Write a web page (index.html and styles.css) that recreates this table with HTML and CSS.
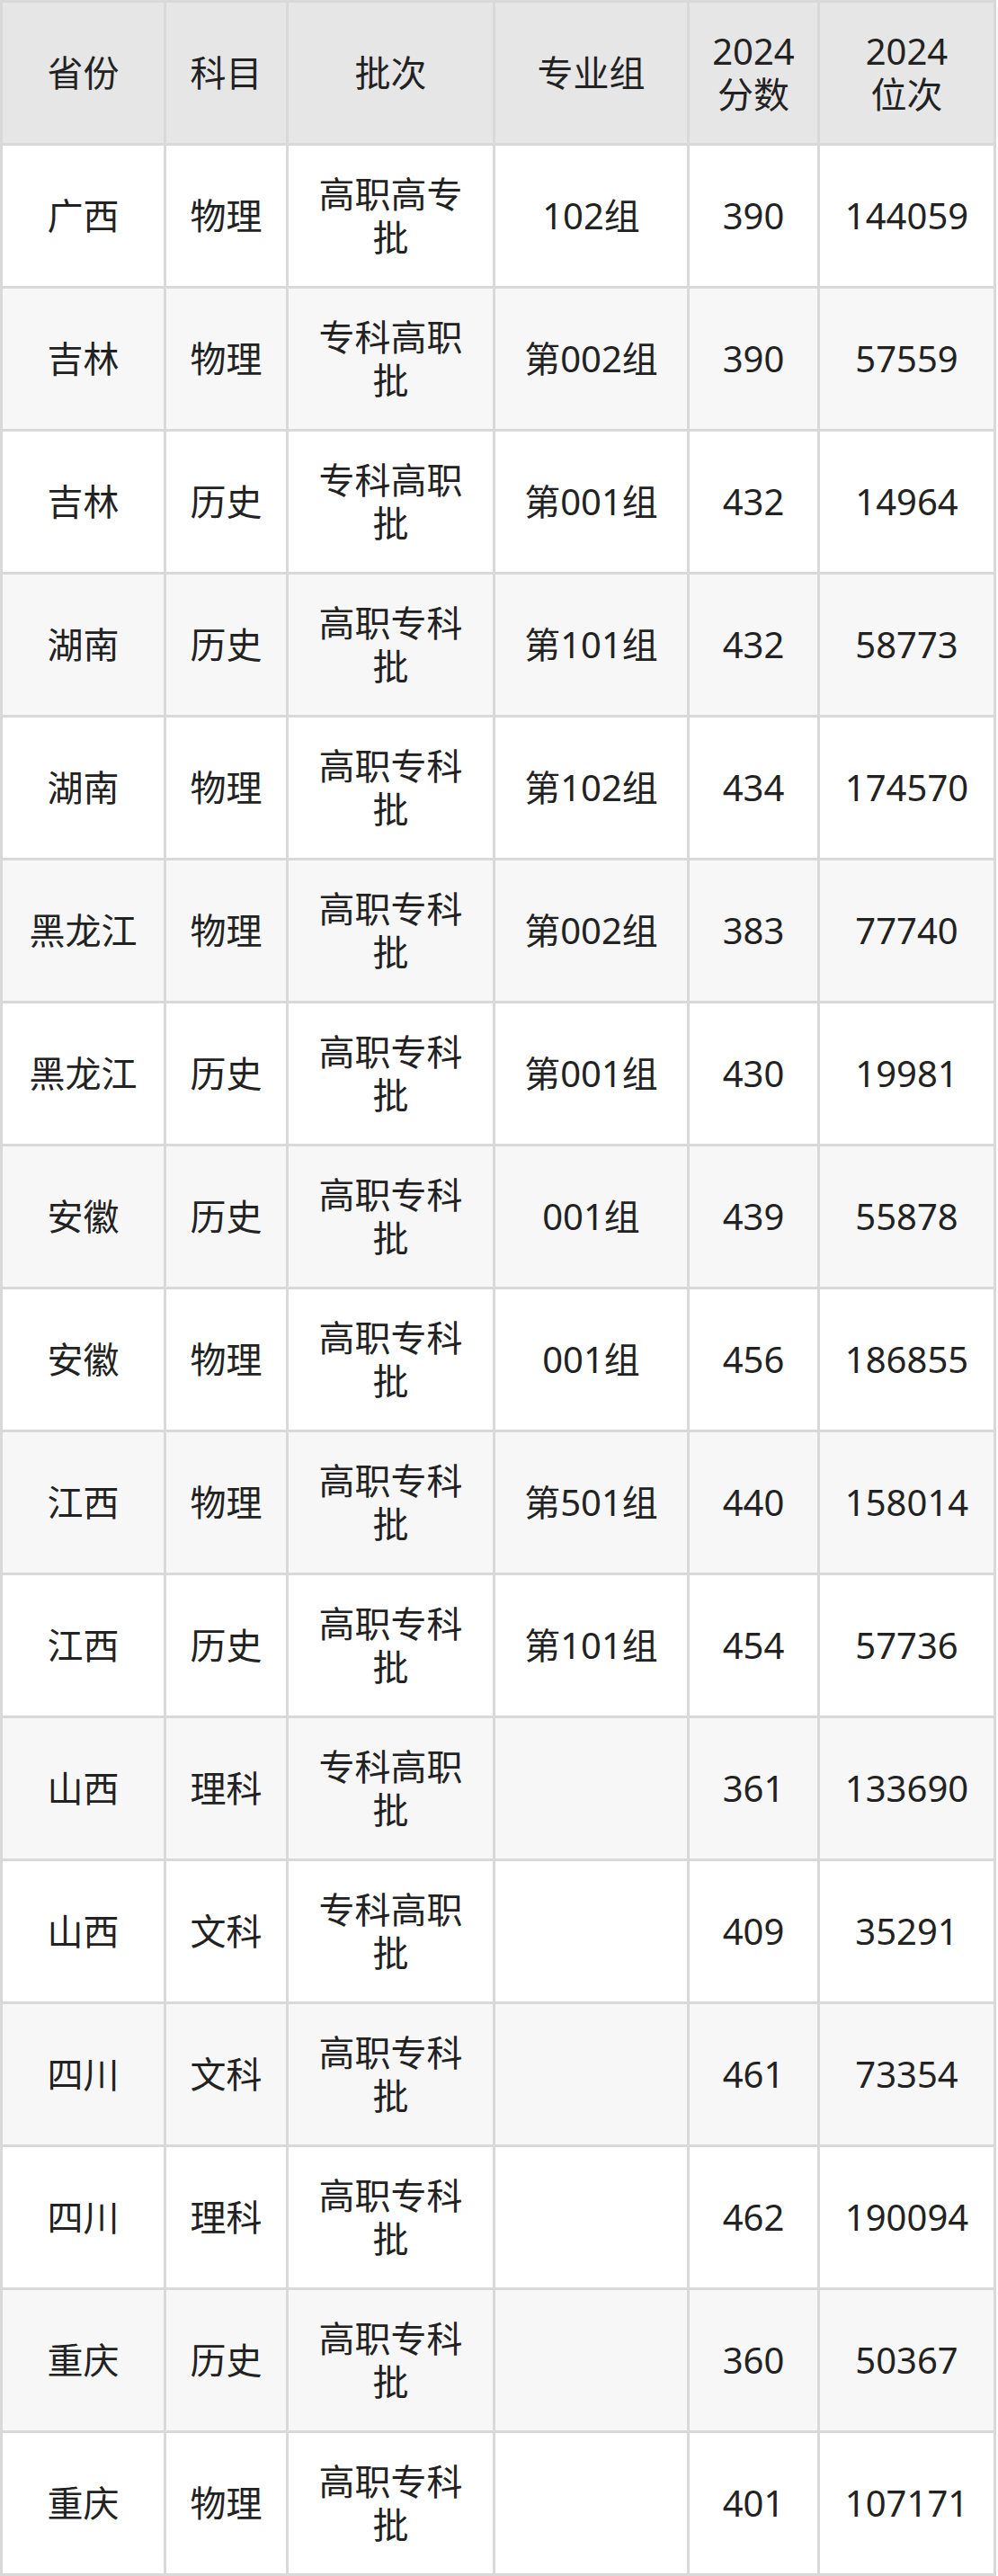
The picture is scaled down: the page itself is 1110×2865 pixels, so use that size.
FILE: index.html
```html
<!DOCTYPE html>
<html lang="zh">
<head>
<meta charset="utf-8">
<title>2024 分数位次</title>
<link rel="stylesheet" href="styles.css">
</head>
<body>
<div class="table">
  <div class="row head"><div class="cell">省份</div><div class="cell">科目</div><div class="cell">批次</div><div class="cell">专业组</div><div class="cell">2024<br>分数</div><div class="cell">2024<br>位次</div></div>
  <div class="row"><div class="cell">广西</div><div class="cell">物理</div><div class="cell">高职高专批</div><div class="cell">102组</div><div class="cell">390</div><div class="cell">144059</div></div>
  <div class="row alt"><div class="cell">吉林</div><div class="cell">物理</div><div class="cell">专科高职批</div><div class="cell">第002组</div><div class="cell">390</div><div class="cell">57559</div></div>
  <div class="row"><div class="cell">吉林</div><div class="cell">历史</div><div class="cell">专科高职批</div><div class="cell">第001组</div><div class="cell">432</div><div class="cell">14964</div></div>
  <div class="row alt"><div class="cell">湖南</div><div class="cell">历史</div><div class="cell">高职专科批</div><div class="cell">第101组</div><div class="cell">432</div><div class="cell">58773</div></div>
  <div class="row"><div class="cell">湖南</div><div class="cell">物理</div><div class="cell">高职专科批</div><div class="cell">第102组</div><div class="cell">434</div><div class="cell">174570</div></div>
  <div class="row alt"><div class="cell">黑龙江</div><div class="cell">物理</div><div class="cell">高职专科批</div><div class="cell">第002组</div><div class="cell">383</div><div class="cell">77740</div></div>
  <div class="row"><div class="cell">黑龙江</div><div class="cell">历史</div><div class="cell">高职专科批</div><div class="cell">第001组</div><div class="cell">430</div><div class="cell">19981</div></div>
  <div class="row alt"><div class="cell">安徽</div><div class="cell">历史</div><div class="cell">高职专科批</div><div class="cell">001组</div><div class="cell">439</div><div class="cell">55878</div></div>
  <div class="row"><div class="cell">安徽</div><div class="cell">物理</div><div class="cell">高职专科批</div><div class="cell">001组</div><div class="cell">456</div><div class="cell">186855</div></div>
  <div class="row alt"><div class="cell">江西</div><div class="cell">物理</div><div class="cell">高职专科批</div><div class="cell">第501组</div><div class="cell">440</div><div class="cell">158014</div></div>
  <div class="row"><div class="cell">江西</div><div class="cell">历史</div><div class="cell">高职专科批</div><div class="cell">第101组</div><div class="cell">454</div><div class="cell">57736</div></div>
  <div class="row alt"><div class="cell">山西</div><div class="cell">理科</div><div class="cell">专科高职批</div><div class="cell"></div><div class="cell">361</div><div class="cell">133690</div></div>
  <div class="row"><div class="cell">山西</div><div class="cell">文科</div><div class="cell">专科高职批</div><div class="cell"></div><div class="cell">409</div><div class="cell">35291</div></div>
  <div class="row alt"><div class="cell">四川</div><div class="cell">文科</div><div class="cell">高职专科批</div><div class="cell"></div><div class="cell">461</div><div class="cell">73354</div></div>
  <div class="row"><div class="cell">四川</div><div class="cell">理科</div><div class="cell">高职专科批</div><div class="cell"></div><div class="cell">462</div><div class="cell">190094</div></div>
  <div class="row alt"><div class="cell">重庆</div><div class="cell">历史</div><div class="cell">高职专科批</div><div class="cell"></div><div class="cell">360</div><div class="cell">50367</div></div>
  <div class="row"><div class="cell">重庆</div><div class="cell">物理</div><div class="cell">高职专科批</div><div class="cell"></div><div class="cell">401</div><div class="cell">107171</div></div>
</div>
</body>
</html>
```
FILE: styles.css
```css
html, body {
  margin: 0;
  padding: 0;
  background: #ffffff;
}

.table {
  display: grid;
  grid-template-columns: 179px 133px 227px 213px 142px 193px;
  grid-auto-rows: 156px;
  gap: 3px;
  padding: 3px;
  width: 1108px;
  box-sizing: border-box;
  background: #d9d9d9;
  font-family: "Noto Sans", "Noto Sans CJK SC", sans-serif;
  font-size: 40px;
  line-height: 48px;
  color: #222222;
}

.row {
  display: contents;
}

.cell {
  display: flex;
  align-items: center;
  justify-content: center;
  text-align: center;
  padding: 0 24px;
  background: #ffffff;
  box-sizing: border-box;
  overflow: hidden;
}

.row.alt .cell {
  background: #f7f7f7;
}

.row.head .cell {
  background: #e6e6e6;
}
```
